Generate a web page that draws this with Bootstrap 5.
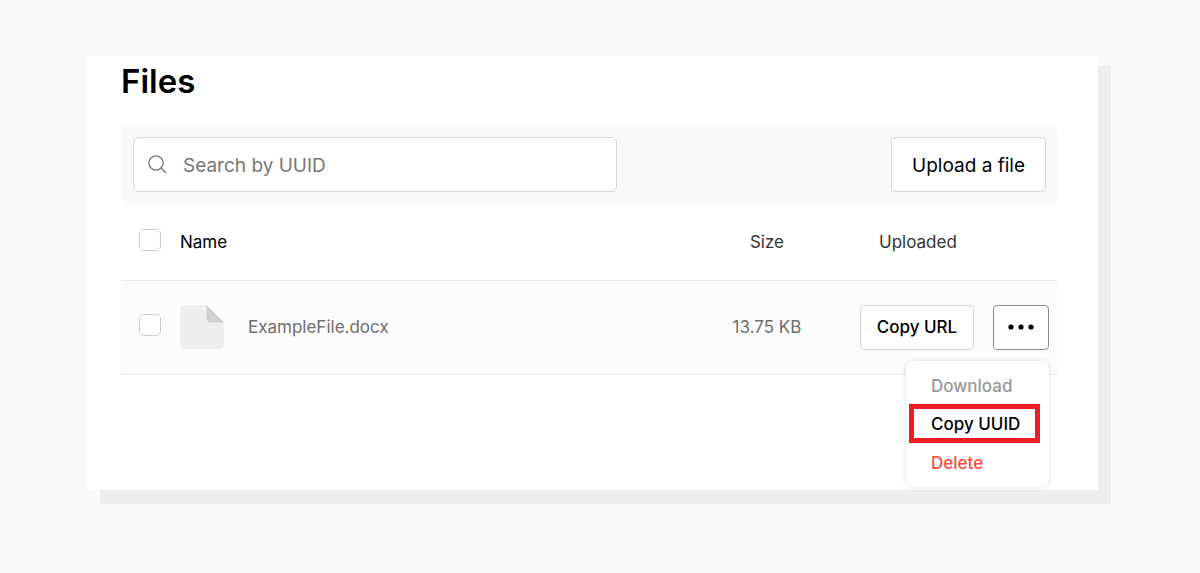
<!DOCTYPE html>
<html lang="en">
<head>
<meta charset="utf-8">
<meta name="viewport" content="width=device-width, initial-scale=1">
<title>Files</title>
<link href="https://cdn.jsdelivr.net/npm/bootstrap@5.3.0/dist/css/bootstrap.min.css" rel="stylesheet">
<style>
  body { background: #fafafa; font-family: Inter, "Liberation Sans", sans-serif; color: #000; }
  .page { padding: 56px 102px 69px 87px; }
  .panel { background: #fff; padding: 5px 41px 115px 34px; box-shadow: 13px 10px #eee, 13px 14px #eee; }
  .panel h1 { font-size: 33px; line-height: 41px; font-weight: 600; margin-bottom: 24px; }
  .toolbar { background: #f9f9f9; border-radius: 7px; padding: 11px 11px 12px 12px; }
  .search { flex: 0 1 484px; height: 55px; background: #fff; border: 1px solid #d6d6d6; border-radius: 6px; padding-left: 14px; gap: 16px; }
  .search input { border: 0; outline: 0; background: none; font-size: 19px; line-height: 28px; padding: 3px 0 0; min-width: 0; }
  .search input::placeholder { color: #777; opacity: 1; }
  .tool-btn { --bs-btn-bg: #fff; --bs-btn-color: #000; --bs-btn-border-color: #d3d3d3; --bs-btn-border-radius: 4px; --bs-btn-padding-x: 0; --bs-btn-padding-y: 0; }
  .upload { width: 155px; height: 55px; padding-top: 3px; font-size: 19px; }
  .row-actions { gap: 19px; }
  .copy-url { width: 114px; height: 45px; padding-top: 2px; font-size: 17px; font-weight: 500; }
  .more { width: 56px; height: 45px; --bs-btn-border-color: #8c8c8c; }
  .file-table { --bs-table-bg: transparent; --bs-table-color: #000; table-layout: fixed; margin: 0; font-size: 17px; line-height: 24px; }
  .file-table th, .file-table td { padding: 0; border-bottom: 1px solid #ececec; font-weight: 400; vertical-align: middle; }
  .file-table thead tr { height: 76px; }
  .file-table tbody tr { height: 94px; background: #fcfcfc; }
  .file-table tbody td { color: #6e6e6e; }
  .col-tick { width: 59px; }
  .col-size { width: 140px; }
  .col-actions { width: 220px; }
  .file-table .uploaded { padding-left: 42px; color: #333; }
  .file-table .size-head { color: #333; }
  .form-check-input.tick { display: block; width: 22px; height: 22px; margin: 0 0 4px 18px; border: 1px solid #ccc; border-radius: 5px; }
  .menu { top: 100%; right: 0; margin-top: 11px; width: 143px; padding: 5px 9px 6px 3px; border-radius: 7px; background: #fff; box-shadow: 0 0 4px rgba(0,0,0,.15); z-index: 5; }
  .menu button { display: block; width: 100%; height: 38px; padding: 2px 17px 0; border: 5px solid transparent; background: none; text-align: left; font-size: 17px; line-height: 26px; font-weight: 500; color: #000; white-space: nowrap; }
  .menu button:disabled { color: #999; }
  .menu .picked { height: 39px; border-color: #ee1c25; }
  .menu .remove { color: #ff4b40; }
</style>
</head>
<body>
<main class="page">
  <section class="panel">
    <h1>Files</h1>
    <div class="toolbar d-flex justify-content-between">
      <label class="search d-flex align-items-center">
        <svg width="19" height="19" viewBox="0 0 19 19" fill="none" stroke="#777" stroke-width="1.4" stroke-linecap="round" aria-hidden="true"><circle cx="8" cy="8" r="7.1"/><path d="M13.1 13.1 17.6 17.4"/></svg>
        <input class="flex-grow-1" type="text" placeholder="Search by UUID" aria-label="Search by UUID">
      </label>
      <button type="button" class="btn tool-btn upload">Upload a file</button>
    </div>
    <table class="table file-table">
      <colgroup><col class="col-tick"><col><col class="col-size"><col class="col-actions"></colgroup>
      <thead>
        <tr>
          <th><input class="form-check-input tick" type="checkbox" aria-label="Select all files"></th>
          <th scope="col">Name</th>
          <th scope="col" class="text-center size-head">Size</th>
          <th scope="col" class="uploaded">Uploaded</th>
        </tr>
      </thead>
      <tbody>
        <tr>
          <td><input class="form-check-input tick" type="checkbox" aria-label="Select ExampleFile.docx"></td>
          <td>
            <div class="d-flex align-items-center gap-4">
              <svg width="44" height="44" viewBox="0 0 45 45" aria-hidden="true"><path fill="#eee" d="M5 0H27L45 18V40a5 5 0 0 1-5 5H5a5 5 0 0 1-5-5V5a5 5 0 0 1 5-5Z"/><path fill="#d0d0d0" d="M27 0 45 18H32a5 5 0 0 1-5-5Z"/></svg>
              <span>ExampleFile.docx</span>
            </div>
          </td>
          <td class="text-center">13.75 KB</td>
          <td>
            <div class="row-actions d-flex justify-content-end pe-2">
              <button type="button" class="btn tool-btn copy-url">Copy URL</button>
              <div class="position-relative">
                <button type="button" class="btn tool-btn more d-flex align-items-center justify-content-center" aria-label="More actions" aria-expanded="true">
                  <svg width="26" height="6" viewBox="0 0 26 6" aria-hidden="true"><circle cx="3" cy="3" r="2.6"/><circle cx="13" cy="3" r="2.6"/><circle cx="23" cy="3" r="2.6"/></svg>
                </button>
                <div class="menu position-absolute">
                  <button type="button" disabled>Download</button>
                  <button type="button" class="picked">Copy UUID</button>
                  <button type="button" class="remove">Delete</button>
                </div>
              </div>
            </div>
          </td>
        </tr>
      </tbody>
    </table>
  </section>
</main>
<script src="https://cdn.jsdelivr.net/npm/bootstrap@5.3.0/dist/js/bootstrap.bundle.min.js"></script>
</body>
</html>
